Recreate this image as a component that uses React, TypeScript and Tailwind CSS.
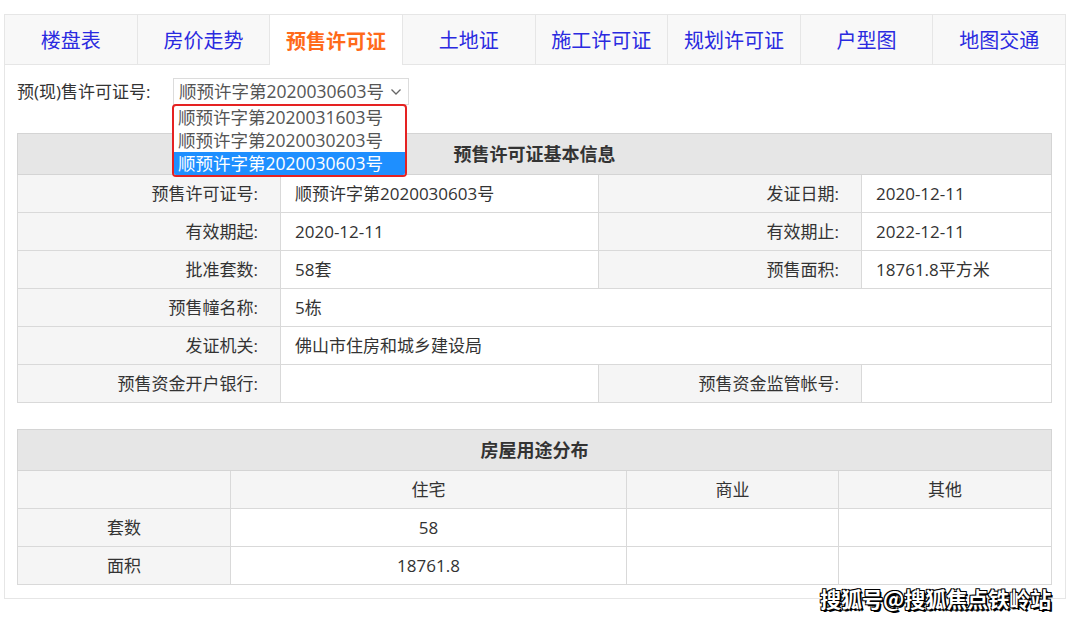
import React from 'react'

const TABS = ['楼盘表', '房价走势', '预售许可证', '土地证', '施工许可证', '规划许可证', '户型图', '地图交通']
const ACTIVE = '预售许可证'

const OPTIONS = ['顺预许字第2020031603号', '顺预许字第2020030203号', '顺预许字第2020030603号']

const td = 'border border-[#d9d9d9] h-[38px] px-[14px] text-[17px] text-[#333] font-normal'
const label = `${td} bg-[#f5f5f5] text-right pr-[22px]`
const value = `${td} bg-white text-left`

export default function App() {
  return (
    <div className="relative w-[1080px] h-[620px] bg-white font-['Open_Sans','Noto_Sans_CJK_SC',sans-serif] overflow-hidden">
      <div className="ml-[4px] mt-[14px] w-[1062px] border border-[#e6e6e6]">
        {/* Tabs */}
        <div className="flex h-[50px]">
          {TABS.map((t, i) => {
            const active = t === ACTIVE
            return (
              <div
                key={t}
                className={
                  'flex-1 flex items-center justify-center pt-[3px] text-[20px] ' +
                  (i < TABS.length - 1 ? 'border-r border-[#e6e6e6] ' : '') +
                  (active
                    ? 'bg-white text-[#ff6a1a] font-bold'
                    : 'bg-[#f8f8f8] text-[#2a2ae0] border-b border-b-[#e6e6e6]')
                }
              >
                {t}
              </div>
            )
          })}
        </div>

        <div className="px-[12px] pb-[13px]">
          {/* Select row */}
          <div className="relative flex items-center mt-[13px] h-[27px]">
            <span className="text-[17px] text-[#333] w-[156px]">预(现)售许可证号:</span>
            <div className="flex items-center h-[27px] w-[236px] border border-[#dcdcdc] pl-[5px] text-[17.5px] text-[#555]">
              <span className="flex-1 whitespace-nowrap">顺预许字第2020030603号</span>
              <svg width="12" height="8" viewBox="0 0 12 8" className="mr-[6px]">
                <path d="M1.5 1.5 L6 6 L10.5 1.5" fill="none" stroke="#666" strokeWidth="1.3" />
              </svg>
            </div>

            {/* Dropdown list */}
            <div className="absolute left-[155px] top-[26px] z-10 w-[235px] border-2 border-[#e52222] rounded-[4px] bg-white overflow-hidden">
              {OPTIONS.map((o, i) => (
                <div
                  key={o}
                  className={
                    'h-[23px] leading-[23px] pl-[4px] text-[17.5px] whitespace-nowrap ' +
                    (i === 2 ? 'bg-[#1e8fff] text-white' : 'text-[#555]')
                  }
                >
                  {o}
                </div>
              ))}
            </div>
          </div>

          {/* 基本信息 */}
          <table className="mt-[28px] w-[1034px] border-collapse table-fixed">
            <colgroup>
              <col className="w-[263px]" />
              <col className="w-[318px]" />
              <col className="w-[263px]" />
              <col className="w-[190px]" />
            </colgroup>
            <tbody>
              <tr>
                <th colSpan={4} className="border border-[#d4d4d4] bg-[#e6e6e6] h-[41px] text-[18px] font-bold text-[#333]">
                  预售许可证基本信息
                </th>
              </tr>
              <tr>
                <td className={label}>预售许可证号:</td>
                <td className={value}>顺预许字第2020030603号</td>
                <td className={label}>发证日期:</td>
                <td className={value}>2020-12-11</td>
              </tr>
              <tr>
                <td className={label}>有效期起:</td>
                <td className={value}>2020-12-11</td>
                <td className={label}>有效期止:</td>
                <td className={value}>2022-12-11</td>
              </tr>
              <tr>
                <td className={label}>批准套数:</td>
                <td className={value}>58套</td>
                <td className={label}>预售面积:</td>
                <td className={value}>18761.8平方米</td>
              </tr>
              <tr>
                <td className={label}>预售幢名称:</td>
                <td colSpan={3} className={value}>5栋</td>
              </tr>
              <tr>
                <td className={label}>发证机关:</td>
                <td colSpan={3} className={value}>佛山市住房和城乡建设局</td>
              </tr>
              <tr>
                <td className={label}>预售资金开户银行:</td>
                <td className={value}></td>
                <td className={label}>预售资金监管帐号:</td>
                <td className={value}></td>
              </tr>
            </tbody>
          </table>

          {/* 房屋用途分布 */}
          <table className="mt-[26px] w-[1034px] border-collapse table-fixed">
            <colgroup>
              <col className="w-[213px]" />
              <col className="w-[396px]" />
              <col className="w-[212px]" />
              <col className="w-[213px]" />
            </colgroup>
            <tbody>
              <tr>
                <th colSpan={4} className="border border-[#d4d4d4] bg-[#e6e6e6] h-[41px] text-[18px] font-bold text-[#333]">
                  房屋用途分布
                </th>
              </tr>
              <tr>
                <td className={`${td} bg-[#f5f5f5]`}></td>
                <td className={`${td} bg-[#f5f5f5] text-center`}>住宅</td>
                <td className={`${td} bg-[#f5f5f5] text-center`}>商业</td>
                <td className={`${td} bg-[#f5f5f5] text-center`}>其他</td>
              </tr>
              <tr>
                <td className={`${td} bg-[#f5f5f5] text-center`}>套数</td>
                <td className={`${td} text-center`}>58</td>
                <td className={td}></td>
                <td className={td}></td>
              </tr>
              <tr>
                <td className={`${td} bg-[#f5f5f5] text-center`}>面积</td>
                <td className={`${td} text-center`}>18761.8</td>
                <td className={td}></td>
                <td className={td}></td>
              </tr>
            </tbody>
          </table>
        </div>
      </div>

      {/* Watermark */}
      <div className="absolute left-[820px] top-[583px] text-[21px] font-bold text-white font-['Noto_Sans_CJK_SC',sans-serif] [text-shadow:1px_1px_0_#000,-1px_-1px_0_#000,1px_-1px_0_#000,-1px_1px_0_#000,2px_2px_0_#000]">
        搜狐号@搜狐焦点铁岭站
      </div>
    </div>
  )
}
